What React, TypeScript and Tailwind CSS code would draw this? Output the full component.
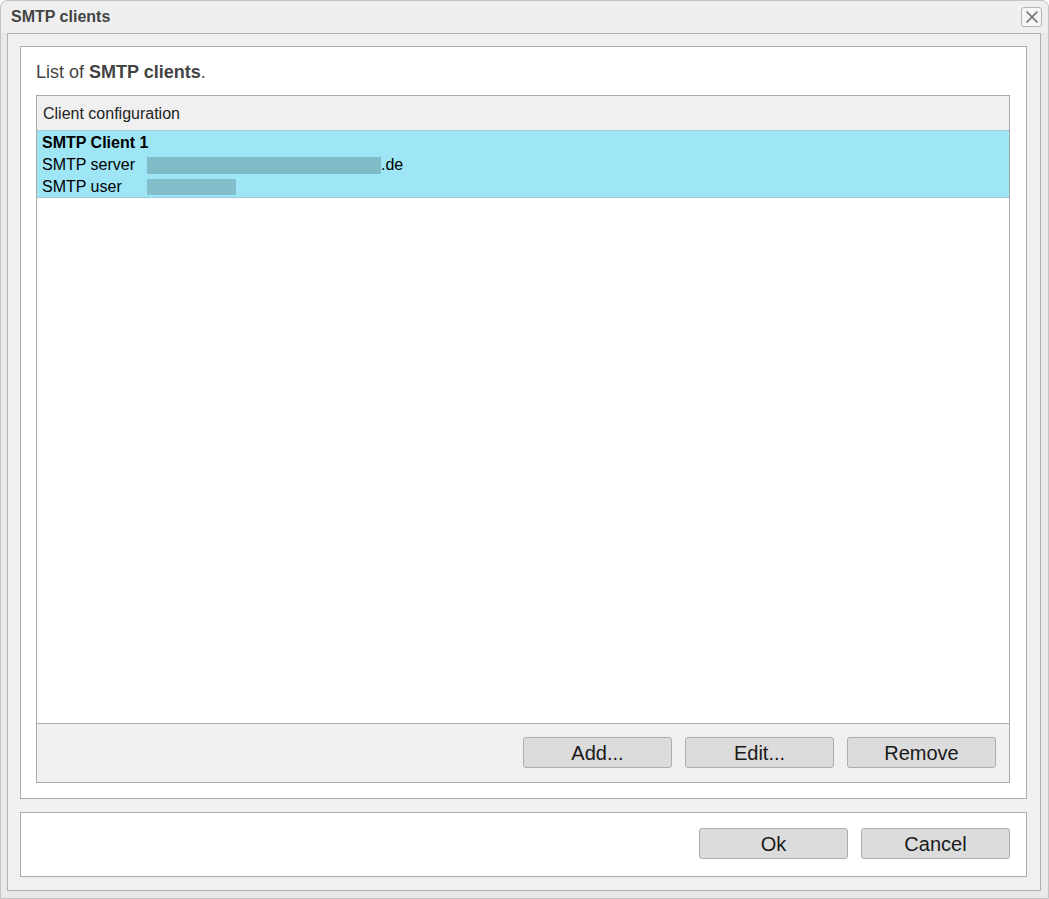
import React from 'react';

const font = { fontFamily: '"Liberation Sans", Arial, sans-serif' };

function DialogButton({ label }: { label: string }) {
  return (
    <button className="w-[149px] h-[31px] rounded-[3px] border border-[#adadad] bg-[#dcdcdc] text-[20px] leading-none text-[#1a1a1a] flex items-center justify-center">
      {label}
    </button>
  );
}

function CloseIcon() {
  return (
    <svg width="14" height="14" viewBox="0 0 14 14" fill="none">
      <path d="M2 2L12 12M12 2L2 12" stroke="#6b6b6b" strokeWidth="1.6" strokeLinecap="round" />
    </svg>
  );
}

export default function App() {
  return (
    <div style={font} className="w-[1049px] h-[899px] bg-white">
      <div className="w-full h-full flex flex-col rounded-t-[7px] border border-[#c4c4c4] bg-[#e9e9e9]">
        {/* title bar */}
        <div className="h-[32px] flex items-center justify-between pl-[10px] pr-[6px] bg-[#efefef] rounded-t-[7px]">
          <span className="text-[16px] font-bold text-[#444444] leading-none">SMTP clients</span>
          <div className="w-[21px] h-[20px] rounded-[3px] border border-[#b3b3b3] bg-[#f5f5f5] flex items-center justify-center">
            <CloseIcon />
          </div>
        </div>

        {/* frame */}
        <div className="flex-1 ml-[6px] mr-[7px] mb-[7px] border border-[#b0b0b0] bg-[#f0f0f0] pt-[12px] pb-[13px] pl-[12px] pr-[13px] flex flex-col gap-[13px]">
          <div className="flex-1 border border-[#acacac] bg-white pt-[14px] pb-[15px] pl-[15px] pr-[16px] flex flex-col">
            <p className="text-[18px] leading-[22px] text-[#444444] mb-[12px]">
              List of <span className="font-bold">SMTP clients</span>.
            </p>

            <div className="flex-1 border border-[#a9a9a9] flex flex-col">
              <div className="h-[34px] bg-[#f0f0f0] flex items-center pl-[6px] pt-[2px] text-[16px] text-[#222222]">
                Client configuration
              </div>

              <div className="flex-1 bg-white">
                <div className="bg-[#9ee6f6] border-y border-dotted border-[#8fb3c9] pl-[5px] pt-[1px] text-[16px] leading-[22px] text-black">
                  <div className="font-bold">SMTP Client 1</div>
                  <div className="flex items-center">
                    <span className="w-[105px]">SMTP server</span>
                    <span className="w-[234px] h-[17px] bg-[#80bcc8]"></span>
                    <span>.de</span>
                  </div>
                  <div className="flex items-center leading-[21px]">
                    <span className="w-[105px]">SMTP user</span>
                    <span className="w-[89px] h-[16px] bg-[#82bfca]"></span>
                  </div>
                </div>
              </div>

              <div className="h-[59px] border-t border-[#acacac] bg-[#f0f0f0] flex items-center justify-end gap-[13px] pr-[13px] pb-[1px]">
                <DialogButton label="Add..." />
                <DialogButton label="Edit..." />
                <DialogButton label="Remove" />
              </div>
            </div>
          </div>

          <div className="h-[65px] border border-[#acacac] bg-white flex items-center justify-end gap-[13px] pr-[16px] pb-[2px]">
            <DialogButton label="Ok" />
            <DialogButton label="Cancel" />
          </div>
        </div>
      </div>
    </div>
  );
}
